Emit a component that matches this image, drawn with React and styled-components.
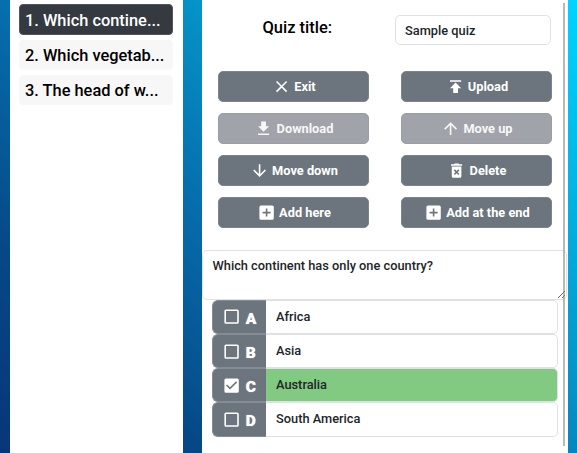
import React from 'react';
import styled, { createGlobalStyle, css } from 'styled-components';
import {
  MdClose, MdPublish, MdFileDownload, MdArrowUpward, MdArrowDownward,
  MdDeleteForever, MdAddBox, MdCheckBox, MdCheckBoxOutlineBlank,
} from 'react-icons/md';

const GlobalStyle = createGlobalStyle`
  *, *::before, *::after { box-sizing: border-box; }
  html, body { margin: 0; height: 100%; overflow: hidden; }
  body { font-family: Roboto, "Liberation Sans", sans-serif; font-weight: 500; color: #212529; }
`;

const Page = styled.main`
  display: flex;
  align-items: stretch;
  gap: 19px;
  width: 577px;
  height: 453px;
  padding: 0 9px 0 10px;
  background: linear-gradient(45deg, #08357a 0%, #064886 20%, #066fae 44%, #0594c8 63%, #00d4ff 100%);
`;

const Sidebar = styled.nav`
  flex: 0 0 173px;
  display: flex;
  flex-direction: column;
  gap: 5px;
  padding: 4px 10px 4px 9.4px;
  background: #fff;
`;

const QuestionTab = styled.button`
  display: block;
  height: ${p => (p.$active ? 31 : 30)}px;
  padding: 0 4.6px;
  border: 1px solid ${p => (p.$active ? '#50555b' : '#f8f8f8')};
  border-radius: 4px;
  background: ${p => (p.$active ? '#343a40' : '#f7f7f7')};
  color: ${p => (p.$active ? '#fff' : '#000')};
  font: 500 16.4px/${p => (p.$active ? 31 : 29)}px Roboto, sans-serif;
  text-align: left;
  white-space: nowrap;
  overflow: hidden;
`;

const Editor = styled.section`
  flex: 0 0 366px;
  position: relative;
  background: #fff;
`;

const ScrollLine = styled.div`
  position: absolute;
  top: 3px;
  right: 3px;
  width: 2px;
  height: 443px;
  background: rgba(128, 128, 128, 0.55);
`;

const TitleRow = styled.header`
  display: grid;
  grid-template-columns: 192.5px 156px;
  align-items: start;
  height: 71px;
  padding-top: 15px;
`;

const TitleLabel = styled.label`
  padding: 3px 2px 0 0;
  text-align: center;
  color: #000;
  font-size: 16.5px;
  line-height: 19px;
`;

const TitleInput = styled.input`
  width: 156px;
  height: 30px;
  margin: 0;
  padding: 0 9.5px;
  border: 1px solid #dee2e6;
  border-radius: 5px;
  color: #212529;
  font: 500 12.8px Roboto, sans-serif;
`;

const Actions = styled.div`
  display: grid;
  grid-template-columns: 151px 151px;
  grid-auto-rows: 31px;
  gap: 11px 32px;
  padding-left: 16.4px;
`;

const Action = styled.button`
  display: flex;
  align-items: center;
  justify-content: center;
  gap: 3px;
  padding: 0;
  border: 1px solid ${p => (p.$disabled ? '#989ea4' : '#7d858c')};
  border-radius: 5px;
  background: ${p => (p.$disabled ? '#a0a4aa' : '#6c757d')};
  color: ${p => (p.$disabled ? '#f7f7f8' : '#fff')};
  font: 700 12.8px/20px Roboto, sans-serif;
`;

const QuestionText = styled.textarea`
  display: block;
  width: 365px;
  height: 50px;
  margin: 22px 0 0;
  padding: 5px 9.5px;
  border: 1px solid #dee2e6;
  border-radius: 5px;
  background: #fff;
  color: #212529;
  font: 500 12.8px/19px Roboto, sans-serif;
  overflow: hidden;
  resize: vertical;
`;

const Answers = styled.div`
  display: flex;
  flex-direction: column;
  padding-left: 9.5px;
`;

const Answer = styled.div`
  display: flex;
  width: 346px;
  height: 34.15px;
`;

const Mark = styled.div`
  display: flex;
  align-items: center;
  flex: 0 0 54.5px;
  gap: 5px;
  padding-left: 9px;
  border: 1px solid #858c93;
  border-right: 0;
  border-radius: 6px 0 0 6px;
  background: #6c757d;
  color: #fff;
`;

const Letter = styled.span`
  padding-top: 4px;
  font: 900 15.5px/18px Roboto, sans-serif;
  text-shadow: 0 0 1px rgba(255, 255, 255, 0.8);
`;

const AnswerText = styled.div`
  flex: 1;
  padding-left: 10px;
  border: 1px solid #dee2e6;
  border-left: 0;
  border-radius: 0 5px 5px 0;
  font-size: 12.8px;
  line-height: 31px;
  ${p => p.$correct && css`background: #82ca82;`}
`;

const questions = ['1. Which contine...', '2. Which vegetab...', '3. The head of w...'];

const actions = [
  { label: 'Exit', Icon: MdClose },
  { label: 'Upload', Icon: MdPublish },
  { label: 'Download', Icon: MdFileDownload, disabled: true },
  { label: 'Move up', Icon: MdArrowUpward, disabled: true },
  { label: 'Move down', Icon: MdArrowDownward },
  { label: 'Delete', Icon: MdDeleteForever },
  { label: 'Add here', Icon: MdAddBox },
  { label: 'Add at the end', Icon: MdAddBox },
];

const answers = [
  { letter: 'A', text: 'Africa' },
  { letter: 'B', text: 'Asia' },
  { letter: 'C', text: 'Australia', correct: true },
  { letter: 'D', text: 'South America' },
];

export default function App() {
  return (
    <>
      <GlobalStyle />
      <Page>
        <Sidebar>
          {questions.map((q, i) => <QuestionTab key={q} $active={i === 0}>{q}</QuestionTab>)}
        </Sidebar>
        <Editor>
          <TitleRow>
            <TitleLabel htmlFor="quiz-title">Quiz title:</TitleLabel>
            <TitleInput id="quiz-title" defaultValue="Sample quiz" />
          </TitleRow>
          <Actions>
            {actions.map(({ label, Icon, disabled }) => (
              <Action key={label} $disabled={disabled}><Icon size={19.2} />{label}</Action>
            ))}
          </Actions>
          <QuestionText defaultValue="Which continent has only one country?" spellCheck={false} />
          <Answers>
            {answers.map(({ letter, text, correct }) => (
              <Answer key={letter}>
                <Mark>
                  {correct ? <MdCheckBox size={19.2} /> : <MdCheckBoxOutlineBlank size={19.2} />}
                  <Letter>{letter}</Letter>
                </Mark>
                <AnswerText $correct={correct}>{text}</AnswerText>
              </Answer>
            ))}
          </Answers>
          <ScrollLine />
        </Editor>
      </Page>
    </>
  );
}
